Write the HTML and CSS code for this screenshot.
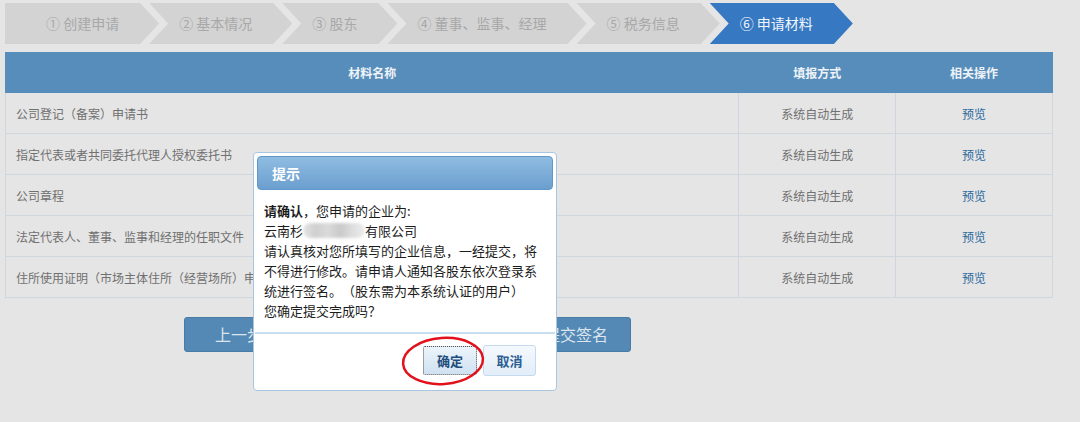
FILE: index.html
```html
<!DOCTYPE html>
<html lang="zh-CN">

<head>
    <meta charset="UTF-8">
    <title>申请材料</title>
    <link rel="stylesheet" href="styles.css">
</head>

<body>
    <!-- 步骤条 -->
    <ul class="steps">
        <li class="step first">① 创建申请</li>
        <li class="step">② 基本情况</li>
        <li class="step">③ 股东</li>
        <li class="step">④ 董事、监事、经理</li>
        <li class="step">⑤ 税务信息</li>
        <li class="step current">⑥ 申请材料</li>
    </ul>

    <!-- 材料列表 -->
    <table class="materials">
        <thead>
            <tr>
                <th class="col-name">材料名称</th>
                <th class="col-way">填报方式</th>
                <th class="col-op">相关操作</th>
            </tr>
        </thead>
        <tbody>
            <tr>
                <td class="name">公司登记（备案）申请书</td>
                <td class="way">系统自动生成</td>
                <td class="op"><a href="#">预览</a></td>
            </tr>
            <tr>
                <td class="name">指定代表或者共同委托代理人授权委托书</td>
                <td class="way">系统自动生成</td>
                <td class="op"><a href="#">预览</a></td>
            </tr>
            <tr>
                <td class="name">公司章程</td>
                <td class="way">系统自动生成</td>
                <td class="op"><a href="#">预览</a></td>
            </tr>
            <tr>
                <td class="name">法定代表人、董事、监事和经理的任职文件</td>
                <td class="way">系统自动生成</td>
                <td class="op"><a href="#">预览</a></td>
            </tr>
            <tr>
                <td class="name">住所使用证明（市场主体住所（经营场所）申请表）</td>
                <td class="way">系统自动生成</td>
                <td class="op"><a href="#">预览</a></td>
            </tr>
        </tbody>
    </table>

    <!-- 底部按钮 -->
    <div class="actions">
        <a href="javascript:;" class="btn">上一步</a>
        <a href="javascript:;" class="btn">提交签名</a>
    </div>

    <!-- 提示弹窗 -->
    <div class="dialog">
        <div class="dialog-title">提示</div>
        <div class="dialog-body">
            <b>请确认</b>，您申请的企业为:<br>
            云南杉<span class="mosaic"></span>有限公司<br>
            请认真核对您所填写的企业信息，一经提交，将不得进行修改。请申请人通知各股东依次登录系统进行签名。（股东需为本系统认证的用户）<br>
            您确定提交完成吗？
        </div>
        <div class="dialog-foot">
            <a href="javascript:;" class="dbtn ok">确定</a>
            <a href="javascript:;" class="dbtn cancel">取消</a>
        </div>
        <!-- 红圈标注 -->
        <svg class="mark" width="88" height="54" viewBox="0 0 88 54">
            <ellipse cx="44" cy="27" rx="40" ry="23" transform="rotate(-4 44 27)" fill="none" stroke="#e2121c" stroke-width="2.5" />
        </svg>
    </div>
</body>

</html>
```

FILE: styles.css
```css
* {
    padding: 0;
    margin: 0;
    box-sizing: border-box;
}

a {
    text-decoration: none;
}

ul,
li {
    list-style: none;
}

body {
    position: relative;
    height: 422px;
    background-color: #e5e5e5;
    font-family: "Noto Sans CJK SC", "Noto Sans", sans-serif;
    text-spacing-trim: space-all;
    overflow: hidden;
}

/* 步骤条 */
.steps {
    display: flex;
    padding: 3px 0 0 5px;
}

.step {
    height: 41px;
    line-height: 41px;
    padding: 0 40px 0 30px;
    margin-left: -10px;
    font-size: 14px;
    color: #a8a8a8;
    background-color: #d3d3d3;
    white-space: nowrap;
    clip-path: polygon(0 0, calc(100% - 19px) 0, 100% 50%, calc(100% - 19px) 100%, 0 100%, 19px 50%);
}

.step.first {
    margin-left: 0;
    padding-left: 41px;
    clip-path: polygon(0 0, calc(100% - 19px) 0, 100% 50%, calc(100% - 19px) 100%, 0 100%);
}

.step.current {
    color: #f2f6fb;
    background-color: #3679c2;
}

/* 材料表格 */
.materials {
    width: 1048px;
    margin: 8px 0 0 5px;
    border-collapse: collapse;
    font-size: 12px;
}

.materials th {
    height: 40px;
    background-color: #568dba;
    color: #eef3f8;
    font-weight: bold;
    border: 1px solid #568dba;
}

.col-name {
    width: 734px;
}

.col-way,
.col-op {
    width: 157px;
}

.materials td {
    height: 41px;
    border: 1px solid #cfd6dd;
    color: #707070;
    text-align: center;
}

.materials td.name {
    text-align: left;
    padding-left: 10px;
}

.materials td.op a {
    color: #2b6a9e;
}

/* 底部按钮 */
.actions {
    display: flex;
    gap: 227px;
    padding: 19px 0 0 184px;
}

.btn {
    width: 110px;
    height: 35px;
    line-height: 33px;
    text-align: center;
    font-size: 16px;
    color: #dde6ee;
    background-color: #5489b5;
    border: 1px solid #4a7ba6;
    border-radius: 3px;
}

/* 弹窗 */
.dialog {
    position: absolute;
    left: 253px;
    top: 152px;
    width: 304px;
    height: 239px;
    padding: 3px;
    background-color: #fff;
    border: 1px solid #a9c6e1;
    border-radius: 4px;
}

.dialog-title {
    height: 34px;
    line-height: 32px;
    padding-left: 14px;
    font-size: 14px;
    font-weight: bold;
    color: #fff;
    background: linear-gradient(#8fbce1, #6b9fcf);
    border: 1px solid #6198ca;
    border-radius: 4px;
}

.dialog-body {
    margin: 0 -2px;
    padding: 11px 7px 11px 9px;
    font-size: 13px;
    line-height: 20px;
    color: #1c1c1c;
    border-bottom: 2px solid #c8def1;
}

.mosaic {
    display: inline-block;
    width: 62px;
    height: 15px;
    vertical-align: -2px;
    border-radius: 8px;
    background: linear-gradient(90deg, #e4e4e4 0, #cfcfcf 20%, #dadada 40%, #c9c9c9 60%, #dedede 80%, #ececec 100%);
    filter: blur(1.5px);
}

.dialog-foot {
    display: flex;
    justify-content: flex-end;
    align-items: center;
    gap: 6px;
    padding: 11px 17px 0 0;
}

.dbtn {
    text-align: center;
    font-size: 13px;
    font-weight: bold;
    border-radius: 3px;
}

.dbtn.ok {
    width: 54px;
    height: 29px;
    line-height: 27px;
    color: #1f4d7e;
    background: linear-gradient(#edf4fb, #cfe1f1);
    border: 1px dotted #555;
    border-radius: 2px;
}

.dbtn.cancel {
    width: 53px;
    height: 31px;
    line-height: 29px;
    color: #2c5e91;
    background: linear-gradient(#f5f9fd, #e2edf8);
    border: 1px solid #c5daee;
}

.mark {
    position: absolute;
    left: 145px;
    top: 181px;
}
```
